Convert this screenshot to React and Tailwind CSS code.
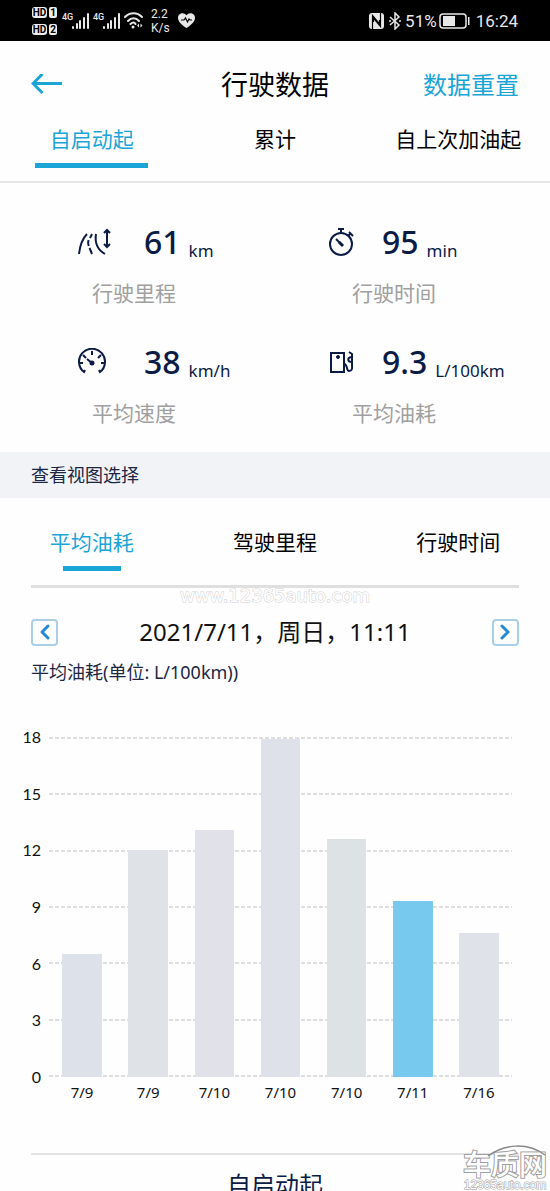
import { useState } from "react";
import { FiChevronLeft, FiChevronRight } from "react-icons/fi";

const RANGES = ["自启动起", "累计", "自上次加油起"];
const VIEWS = ["平均油耗", "驾驶里程", "行驶时间"];
const TICKS = [18, 15, 12, 9, 6, 3, 0];
const MAX = 18;

const TRIPS = [
  { date: "7/9", value: 6.5, color: "bg-[#dde2ea]" },
  { date: "7/9", value: 12, color: "bg-[#dfe2e6]" },
  { date: "7/10", value: 13.1, color: "bg-[#e1e1e9]" },
  { date: "7/10", value: 17.9, color: "bg-[#dfe1ea]" },
  { date: "7/10", value: 12.6, color: "bg-[#dde2e4]" },
  { date: "7/11", value: 9.3, color: "bg-[#77c9ed]" },
  { date: "7/16", value: 7.6, color: "bg-[#dfe2e9]" },
];

const Signal = () => (
  <div className="flex items-start">
    <span className="w-[9px] font-['Liberation_Sans_Narrow','Roboto',sans-serif] text-[9px] leading-[8px] font-medium">4G</span>
    <svg className="ml-px" width="17" height="16" viewBox="0 0 17 16" fill="currentColor" aria-hidden="true">
      <rect x="0" y="13" width="2" height="3" rx="1" />
      <rect x="4" y="10" width="2" height="6" rx="1" />
      <rect x="7" y="7" width="2" height="9" rx="1" />
      <rect x="11" y="4" width="2" height="12" rx="1" />
      <rect x="15" y="0" width="2" height="16" rx="1" />
    </svg>
  </div>
);

const HdBadge = ({ n }) => (
  <div className="flex gap-[2px] text-[10px] leading-[11px] font-bold text-black">
    <span className="w-[15px] rounded-[3px] bg-[#eee] text-center">HD</span>
    <span className="w-[8px] rounded-[2px] bg-[#eee] text-center">{n}</span>
  </div>
);

const StatusBar = () => (
  <div className="flex h-[41px] shrink-0 items-center justify-between bg-black pr-8 pl-8 font-['Roboto','Liberation_Sans',sans-serif] text-[#e8e8e8]">
    <div className="flex items-center">
      <div className="mr-[5px] flex flex-col gap-[6px]">
        <HdBadge n={1} />
        <HdBadge n={2} />
      </div>
      <div className="mr-1 flex gap-1">
        <Signal />
        <Signal />
      </div>
      <svg width="19" height="17" viewBox="0 0 19 17" fill="none" stroke="currentColor" strokeWidth="2" aria-hidden="true">
        <path d="M1 5C6 0 13 0 18 5M4 9c3.500-3.700 7.500-3.700 11 0M6.500 12c2-1.900 4-1.900 5 0" strokeLinecap="round" />
        <circle cx="9" cy="15" r="1.500" fill="currentColor" stroke="none" />
        <path d="M15 11.500 13 13.500l2 2zM16.500 11.500l2 2-2 2z" fill="currentColor" stroke="none" />
      </svg>
      <div className="ml-2 flex flex-col text-[12px] leading-[14px]">
        <span>2.2</span>
        <span>K/s</span>
      </div>
      <svg className="ml-2" width="17" height="15" viewBox="0 0 17 15" aria-hidden="true">
        <path d="M8.500 15C4 12 0 8.500 0 4.700 0 0 6-1.500 8.500 2.300 11-1.500 17 0 17 4.700 17 8.500 13 12 8.500 15Z" fill="currentColor" />
        <path d="M3 7h3l1.500-2 2 4L11 6l1 1h2" fill="none" stroke="#000" strokeWidth="1.200" />
      </svg>
    </div>
    <div className="flex items-center">
      <svg width="15" height="16" viewBox="0 0 15 16" aria-hidden="true">
        <rect width="15" height="16" rx="3" fill="currentColor" />
        <path d="M3.500 16V2.500l7 8.500V7M11.500 0v13.500L4.500 5v4" stroke="#000" strokeWidth="1.200" fill="none" />
      </svg>
      <svg className="ml-[5px]" width="12" height="18" viewBox="0 0 12 18" fill="none" stroke="currentColor" strokeWidth="1.500" aria-hidden="true">
        <path d="m1 5 9 8-4 4V1l4 4-9 8" />
        <path d="M0 9h2M10 9h2" />
      </svg>
      <span className="ml-1 text-[17px] leading-5">51%</span>
      <svg className="ml-[2px]" width="31" height="16" viewBox="0 0 31 16" aria-hidden="true">
        <rect x="1" y="1" width="26" height="14" rx="3" fill="none" stroke="currentColor" strokeWidth="1.500" />
        <rect x="4" y="3" width="12" height="10" fill="currentColor" />
        <rect x="29" y="4" width="1.500" height="8" fill="currentColor" />
      </svg>
      <span className="ml-[6px] text-[17px] leading-5">16:24</span>
    </div>
  </div>
);

const iconProps = {
  fill: "none",
  stroke: "currentColor",
  strokeWidth: 2,
  "aria-hidden": true,
};

const RoadIcon = () => (
  <svg width="34" height="30" viewBox="0 0 34 30" {...iconProps}>
    <path d="M9 6C4 11 2 17 1 26" />
    <path d="M14 6l-2 4M10.500 12c-.6 2-.5 4 .2 6M11.500 20l2.500 6" />
    <path d="M18 6c-1.500 9 2 16 9 20" />
    <path d="M29 2v17M26 5l3-3 3 3M26 16l3 3 3-3" />
  </svg>
);

const StopwatchIcon = () => (
  <svg width="28" height="30" viewBox="0 0 28 30" {...iconProps}>
    <circle cx="13" cy="16" r="11" />
    <path d="M13 5V1M10 1h6M20 8l3-3M21 4l4 4" />
    <path d="m8 11 6 6" />
    <path d="m11 14 4 4" strokeWidth="3" />
  </svg>
);

const SpeedIcon = () => (
  <svg width="30" height="30" viewBox="0 0 30 30" {...iconProps}>
    <path d="M7 22l-1 2A13 13 0 1 1 22 24l-1-2" />
    <path d="M14 3v4M5 7l3 3M23 7l-3 3M1 15h4M27 15h-4" />
    <path d="m9 11 5 4" />
    <circle cx="14" cy="15" r="1.500" fill="currentColor" />
  </svg>
);

const FuelIcon = () => (
  <svg width="28" height="30" viewBox="0 0 28 30" {...iconProps}>
    <path d="M3 5h13v19H3z" />
    <circle cx="10" cy="9" r="1.500" fill="currentColor" strokeWidth="1" />
    <path d="M16 16c4 0 2 7 5 7 4 0 3-4 3-7V6l-3-2M24 9c-5 0-5 5 0 5" />
  </svg>
);

const STATS = [
  { icon: RoadIcon, value: "61", unit: "km", label: "行驶里程" },
  { icon: StopwatchIcon, value: "95", unit: "min", label: "行驶时间" },
  { icon: SpeedIcon, value: "38", unit: "km/h", label: "平均速度" },
  { icon: FuelIcon, value: "9.3", unit: "L/100km", label: "平均油耗" },
];

const Stat = ({ icon: Icon, value, unit, label }) => (
  <div className="group odd:pl-[78px] even:pl-[53px]">
    <div className="flex items-end text-[#0a1c45]">
      <div className="w-[66px] pb-1 group-even:w-[54px]">
        <Icon />
      </div>
      <span className="text-[32px] leading-10 font-medium">{value}</span>
      <span className="ml-2 text-[17px] leading-[22px]">{unit}</span>
    </div>
    <p className="mt-[17px] pl-[14px] text-[21px] leading-7 text-[#a0a0a0] group-even:pl-6">{label}</p>
  </div>
);

const StatGrid = () => (
  <section className="grid shrink-0 grid-cols-2 gap-y-[35px] pt-[39px] pb-[25px]">
    {STATS.map((s) => (
      <Stat key={s.label} {...s} />
    ))}
  </section>
);

const Chart = () => (
  <div className="mt-[53px] mr-[38px] ml-5 flex">
    <div className="-my-[10px] mr-2 flex w-[21px] flex-col justify-between text-right font-['Lato',sans-serif] text-base leading-5 text-[#111]">
      {TICKS.map((t) => (
        <span key={t}>{t}</span>
      ))}
    </div>
    <div className="grid h-[340px] flex-1">
      <div className="col-start-1 row-start-1 flex flex-col justify-between">
        {TICKS.map((t) => (
          <div key={t} className="h-[2px] bg-[repeating-linear-gradient(90deg,#dedede_0_4px,transparent_4px_6px)]" />
        ))}
      </div>
      <div className="z-10 col-start-1 row-start-1 grid grid-cols-7 items-end">
        {TRIPS.map((t, i) => (
          <div
            key={i}
            className={`mx-auto w-3/5 ${t.color}`}
            style={{ height: `${(t.value / MAX) * 100}%` }}
          />
        ))}
      </div>
    </div>
  </div>
);

function App() {
  const [range, setRange] = useState(0);
  const [view, setView] = useState(0);

  return (
    <div className="relative flex h-screen flex-col overflow-hidden bg-[#fefefe] font-['Noto_Sans','Noto_Sans_CJK_SC',sans-serif] text-black">
      <StatusBar />

      {/* Title bar */}
      <header className="grid grid-cols-3 items-center px-[31px] pt-6">
        <button aria-label="返回" className="text-[#1aa5d6]">
          <svg width="32" height="22" viewBox="0 0 32 22" fill="none" stroke="currentColor" strokeWidth="3" aria-hidden="true">
            <path d="M31 9.500H2M11.500 0 2 9.500l9.500 9.500" />
          </svg>
        </button>
        <h1 className="text-center text-[27px] leading-10">行驶数据</h1>
        <button className="text-right text-[24px] leading-10 text-[#1aa5d6]">数据重置</button>
      </header>

      {/* Range tabs */}
      <div role="tablist" className="grid shrink-0 grid-cols-3 border-b-2 border-[#e6e6e6] pt-5 pb-[13px]">
        {RANGES.map((r, i) => (
          <button
            key={r}
            role="tab"
            aria-selected={range === i}
            onClick={() => setRange(i)}
            className={`flex flex-col items-center gap-[10px] text-[21px] leading-7 ${range === i ? "text-[#1aa5d6]" : ""}`}
          >
            {r}
            {range === i && <span className="h-[5px] w-[113px] bg-[#1aa5d6]" />}
          </button>
        ))}
      </div>

      <StatGrid />

      <h2 className="shrink-0 bg-[#f2f3f7] px-[31px] text-[18px] leading-[46px] text-[#1a2644]">查看视图选择</h2>

      {/* View tabs */}
      <div className="shrink-0">
        <div role="tablist" className="grid grid-cols-3 pt-[30px] pb-[14px]">
          {VIEWS.map((v, i) => (
            <button
              key={v}
              role="tab"
              aria-selected={view === i}
              onClick={() => setView(i)}
              className={`flex flex-col items-center gap-[10px] text-[21px] leading-7 ${view === i ? "text-[#1aa5d6]" : ""}`}
            >
              {v}
              {view === i && <span className="h-[5px] w-[58px] bg-[#1aa5d6]" />}
            </button>
          ))}
        </div>
        <div className="relative mx-[31px] h-[3px] bg-[#dfdfdf]">
          <span className="absolute top-px left-1/2 -translate-x-1/2 font-['DejaVu_Sans',sans-serif] text-[18px] leading-5 text-white [-webkit-text-stroke:1px_#d0d0d0] [paint-order:stroke]">
            www.12365auto.com
          </span>
        </div>
      </div>

      {/* Selected trip */}
      <div className="mt-7 flex items-center justify-between px-[31px]">
        <button aria-label="上一条" className="flex size-[27px] items-center justify-center rounded-sm border-2 border-[#a9cfe6] text-[#2389d6]">
          <FiChevronLeft size={24} strokeWidth={3} className="shrink-0" />
        </button>
        <p className="text-[24px] leading-8 text-[#111]">2021/7/11，周日，11:11</p>
        <button aria-label="下一条" className="flex size-[27px] items-center justify-center rounded-sm border-2 border-[#a9cfe6] text-[#2389d6]">
          <FiChevronRight size={24} strokeWidth={3} className="shrink-0" />
        </button>
      </div>
      <p className="mt-3 px-[31px] text-[18px] leading-6 text-[#1a2644]">平均油耗(单位: L/100km))</p>

      <Chart />
      <div className="mr-[38px] ml-[49px] grid grid-cols-7 pt-[5px] text-center text-[15px] leading-5 text-[#111]">
        {TRIPS.map((t, i) => (
          <span key={i}>{t.date}</span>
        ))}
      </div>

      <h2 className="mx-[31px] mt-[51px] shrink-0 border-t-2 border-[#e2e2e2] pt-3 text-center text-[24px] leading-9 text-[#0a1c45]">
        自启动起
      </h2>

      {/* Site mark */}
      <div className="absolute right-[3px] bottom-0 flex flex-col items-center text-white [paint-order:stroke]">
        <svg className="absolute -top-1 right-0" width="60" height="12" viewBox="0 0 60 12" fill="none" stroke="#888" strokeWidth="1.500" aria-hidden="true">
          <path d="M1 11C18-2 42-2 58 10" />
        </svg>
        <span className="text-[28px] leading-[30px] font-medium [-webkit-text-stroke:2px_#a0a0a0]">车质网</span>
        <span className="font-['Liberation_Sans',sans-serif] text-[12px] leading-3 [-webkit-text-stroke:1px_#a0a0a0]">12365auto.com</span>
      </div>
    </div>
  );
}

export default App;
